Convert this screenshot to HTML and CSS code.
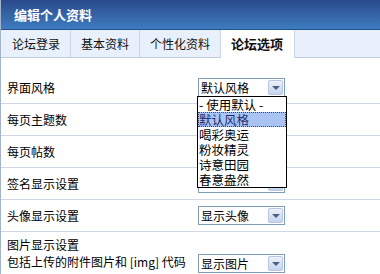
FILE: index.html
```html
<!DOCTYPE html>
<html lang="zh-CN">
<head>
    <meta charset="UTF-8">
    <title>编辑个人资料</title>
    <link rel="stylesheet" href="styles.css">
</head>
<body>
    <div class="panel">
        <div class="panel-title">编辑个人资料</div>

        <ul class="tabs">
            <li class="tab">论坛登录</li>
            <li class="tab">基本资料</li>
            <li class="tab">个性化资料</li>
            <li class="tab active">论坛选项</li>
        </ul>

        <div class="form">
            <div class="row">
                <div class="label">界面风格</div>
                <div class="field">
                    <div class="select">
                        <span class="select-text">默认风格</span>
                        <span class="select-btn"></span>
                    </div>
                    <!-- opened list of the style select -->
                    <ul class="dropdown">
                        <li>- 使用默认 -</li>
                        <li class="selected">默认风格</li>
                        <li>喝彩奥运</li>
                        <li>粉妆精灵</li>
                        <li>诗意田园</li>
                        <li>春意盎然</li>
                    </ul>
                </div>
            </div>

            <!-- these selects are covered by the open list -->
            <div class="row">
                <div class="label">每页主题数</div>
                <div class="field">
                    <div class="select">
                        <span class="select-text"></span>
                        <span class="select-btn"></span>
                    </div>
                </div>
            </div>

            <div class="row">
                <div class="label">每页帖数</div>
                <div class="field">
                    <div class="select">
                        <span class="select-text"></span>
                        <span class="select-btn"></span>
                    </div>
                </div>
            </div>

            <div class="row">
                <div class="label">签名显示设置</div>
                <div class="field">
                    <div class="select">
                        <span class="select-text"></span>
                        <span class="select-btn"></span>
                    </div>
                </div>
            </div>

            <div class="row">
                <div class="label">头像显示设置</div>
                <div class="field">
                    <div class="select">
                        <span class="select-text">显示头像</span>
                        <span class="select-btn"></span>
                    </div>
                </div>
            </div>

            <div class="row multi">
                <div class="label">图片显示设置<br>包括上传的附件图片和 [img] 代码</div>
                <div class="field">
                    <div class="select">
                        <span class="select-text">显示图片</span>
                        <span class="select-btn"></span>
                    </div>
                </div>
            </div>
        </div>
    </div>
</body>
</html>
```

FILE: styles.css
```css
body {
    margin: 0;
    background-color: #fff;
    font-family: 'Noto Sans CJK SC', 'Liberation Sans', sans-serif;
    font-size: 12px;
    color: #000;
}

.panel {
    width: 380px;
    height: 274px;
    overflow: hidden;
    border-left: 1px solid #a3b3ca;
    box-sizing: border-box;
}

.panel-title {
    height: 29px;
    line-height: 29px;
    padding-left: 13px;
    background: linear-gradient(#2a4a8a, #3e7cc0);
    border-bottom: 1px solid #24508c;
    color: #fff;
    font-size: 13px;
    font-weight: bold;
}

.tabs {
    display: flex;
    list-style: none;
    margin: 0;
    padding: 0 0 0 1px;
    height: 27px;
    background-color: #e7f0fb;
    border-bottom: 1px solid #c3ccd8;
}

.tab {
    padding: 0 10px;
    line-height: 27px;
    border-right: 1px solid #ccd6e2;
    color: #111;
}

.tab.active {
    background-color: #fff;
    font-size: 13px;
    font-weight: bold;
    height: 28px;
    padding-right: 11px;
}

.form {
    padding-top: 14px;
}

.row {
    display: flex;
    align-items: center;
    height: 31px;
    border-bottom: 1px solid #cfd8e3;
}

.row.multi {
    align-items: flex-start;
    height: auto;
    border-bottom: none;
    padding-top: 4px;
}

.label {
    width: 190px;
    padding-left: 6px;
    line-height: 17px;
}

.field {
    position: relative;
}

.row.multi .field {
    margin-top: 18px;
}

.select {
    display: flex;
    align-items: center;
    justify-content: space-between;
    width: 87px;
    height: 19px;
    box-sizing: border-box;
    border: 1px solid #7f9db9;
    background-color: #fff;
    padding: 0 1px 0 2px;
    margin-left: 1px;
}

.select-text {
    line-height: 17px;
}

.select-btn {
    position: relative;
    width: 15px;
    height: 15px;
    box-sizing: border-box;
    border: 1px solid #b9c8e0;
    border-radius: 2px;
    background: linear-gradient(#eef3fc, #c5d4ee);
}

.select-btn::after {
    content: '';
    position: absolute;
    left: 3px;
    top: 5px;
    border-left: 4px solid transparent;
    border-right: 4px solid transparent;
    border-top: 4px solid #4d6185;
}

.dropdown {
    position: absolute;
    left: 0;
    top: 18px;
    width: 88px;
    margin: 0;
    padding: 0;
    list-style: none;
    background-color: #fff;
    border: 1px solid #000;
    font-size: 12.5px;
    z-index: 2;
}

.dropdown li {
    height: 15px;
    line-height: 15px;
    padding-left: 1px;
}

.dropdown li.selected {
    background-color: #a9c4f3;
    color: #1f2e6b;
    outline: 1px dotted #445;
    outline-offset: -1px;
}
```
